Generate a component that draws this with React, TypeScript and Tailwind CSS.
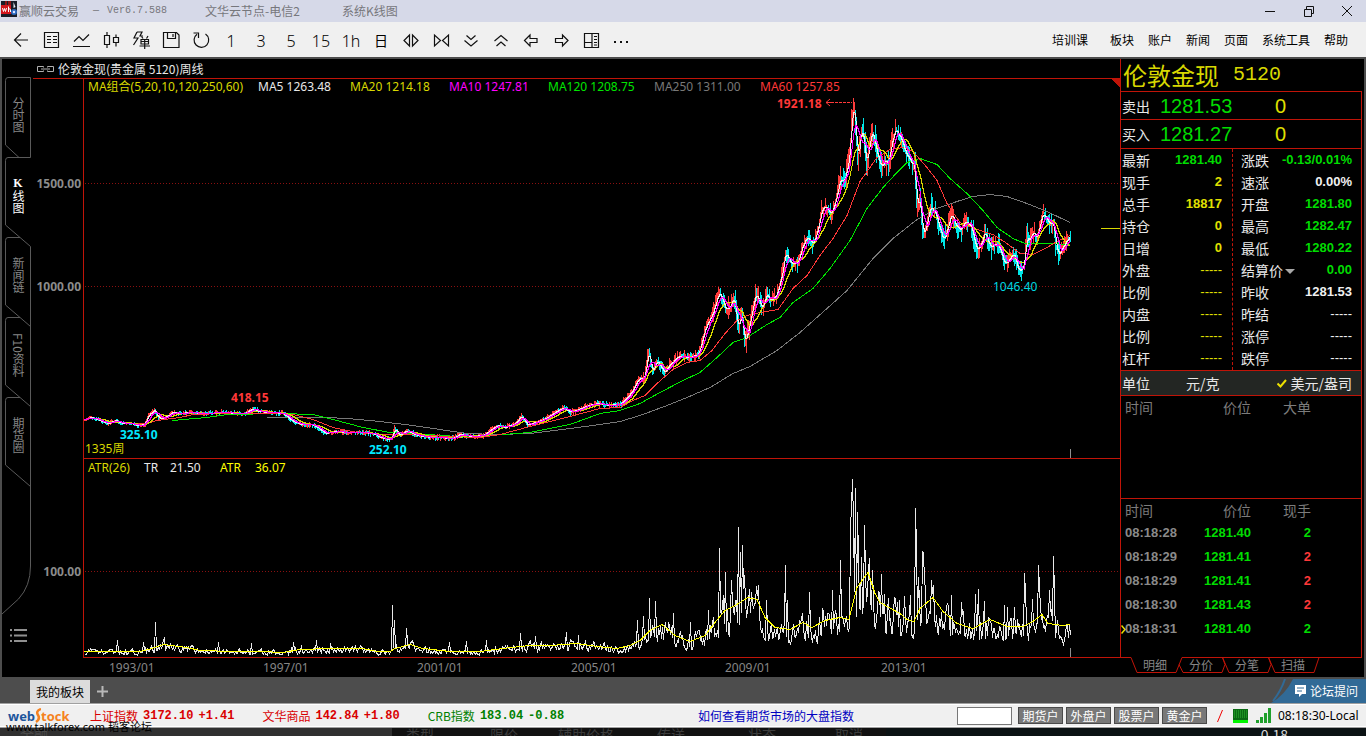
import React from "react";

type Pt = [number, number];

const CJK = "font-['Noto_Sans_CJK_SC',sans-serif]";
const LATIN = "font-['Noto_Sans','Noto_Sans_CJK_SC',sans-serif]";
const ARIAL = "font-['Liberation_Sans','Noto_Sans_CJK_SC',sans-serif]";
const MONO = "font-['Liberation_Mono',monospace]";

/* ---------- chart data ---------- */

const PRICE: Pt[] = [
  [84, 419], [90, 417], [97, 419], [107, 423], [115, 420], [122, 423], [130, 423], [138, 425], [144, 424], [148, 415],
  [154, 409], [158, 418], [165, 417], [172, 412], [180, 413], [190, 412], [200, 413], [220, 412], [245, 413], [252, 408],
  [258, 411], [270, 412], [283, 413], [291, 420], [300, 424], [310, 424], [317, 427], [325, 433], [336, 431], [345, 432],
  [360, 432], [372, 433], [380, 437], [388, 439], [391, 438], [394, 428], [399, 435], [407, 430], [413, 434], [430, 437],
  [440, 437], [452, 438], [460, 434], [470, 436], [483, 435], [488, 431], [497, 425], [505, 427], [515, 423], [521, 415],
  [527, 425], [535, 422], [545, 418], [555, 412], [563, 407], [570, 412], [578, 409], [585, 406], [593, 404], [600, 403],
  [608, 405], [620, 404], [627, 396], [633, 389], [637, 379], [644, 377], [648, 350], [652, 372], [656, 360], [664, 372],
  [670, 363], [680, 355], [690, 357], [698, 354], [705, 327], [712, 313], [719, 291], [725, 309], [730, 307], [733, 296],
  [738, 330], [741, 310], [744, 343], [750, 320], [755, 292], [762, 308], [766, 293], [770, 300], [776, 296], [781, 276],
  [785, 252], [790, 263], [797, 263], [803, 242], [807, 236], [812, 245], [818, 226], [821, 210], [825, 206], [831, 214],
  [835, 200], [840, 177], [843, 182], [845, 176], [849, 156], [851, 121], [853, 101], [855, 121], [857, 163], [861, 128],
  [864, 145], [866, 168], [869, 143], [872, 131], [876, 152], [881, 167], [884, 160], [888, 163], [891, 143], [895, 128],
  [901, 139], [905, 153], [909, 157], [912, 165], [914, 161], [916, 207], [919, 197], [923, 238], [930, 205], [936, 216],
  [943, 241], [947, 229], [951, 212], [955, 224], [960, 230], [964, 220], [970, 224], [976, 250], [981, 243], [984, 231],
  [990, 248], [997, 242], [1001, 254], [1004, 264], [1008, 260], [1013, 252], [1018, 271], [1022, 268], [1024, 262], [1026, 235],
  [1029, 240], [1033, 230], [1036, 239], [1039, 226], [1042, 213], [1049, 223], [1053, 222], [1055, 244], [1058, 255],
  [1062, 247], [1066, 240], [1069, 238], [1071, 228],
];

const MA60: Pt[] = [
  [130, 423], [147, 423], [157, 420], [180, 417], [193, 414], [227, 413], [280, 413], [293, 414], [313, 419], [333, 427],
  [357, 432], [380, 434], [413, 434], [447, 436], [480, 437], [500, 434], [530, 426], [570, 416], [600, 408], [620, 407],
  [633, 400], [645, 395], [657, 383], [673, 369], [687, 362], [700, 360], [712, 350], [725, 333], [737, 320], [747, 315],
  [760, 312], [778, 309], [793, 288], [807, 275], [820, 255], [833, 238], [847, 215], [860, 181], [877, 157], [890, 149],
  [903, 147], [913, 151], [927, 167], [937, 180], [947, 203], [960, 222], [977, 229], [993, 234], [1007, 243], [1020, 253],
  [1033, 254], [1047, 247], [1057, 241], [1070, 235],
];

const MA120: Pt[] = [
  [172, 420], [207, 417], [227, 414], [280, 413], [313, 414], [333, 419], [363, 427], [390, 432], [427, 434], [457, 436],
  [490, 435], [530, 432], [570, 424], [600, 413], [620, 410], [640, 403], [660, 392], [683, 380], [700, 372], [717, 357],
  [733, 342], [747, 337], [767, 324], [780, 317], [793, 302], [813, 288], [830, 268], [850, 240], [867, 208], [883, 187],
  [897, 172], [907, 162], [920, 158], [937, 164], [950, 178], [967, 193], [983, 210], [997, 227], [1013, 238], [1025, 243],
  [1047, 243], [1070, 244],
];

const MA250: Pt[] = [
  [267, 417], [327, 417], [347, 418], [380, 421], [413, 425], [440, 429], [467, 433], [497, 434], [530, 433], [570, 428],
  [600, 424], [620, 421], [640, 415], [667, 405], [687, 397], [710, 387], [733, 373], [750, 366], [777, 350], [800, 332],
  [827, 308], [847, 290], [873, 258], [893, 238], [917, 219], [937, 208], [957, 201], [973, 196], [990, 194], [1007, 196],
  [1027, 203], [1047, 211], [1070, 222],
];

const ATR: Pt[] = [
  [84, 651], [140, 651], [152, 648], [163, 644], [187, 647], [200, 650], [233, 651], [260, 651], [283, 652], [300, 649],
  [330, 648], [363, 648], [377, 651], [390, 651], [395, 648], [410, 644], [423, 648], [450, 651], [480, 651], [503, 648],
  [530, 645], [550, 645], [577, 643], [597, 646], [617, 648], [630, 645], [640, 640], [650, 630], [662, 624], [675, 635],
  [690, 641], [705, 635], [715, 622], [725, 610], [735, 605], [748, 597], [757, 599], [765, 617], [775, 627], [790, 629],
  [803, 622], [812, 627], [825, 620], [840, 617], [849, 619], [857, 587], [868, 572], [875, 593], [880, 602], [900, 613],
  [907, 619], [914, 621], [920, 608], [927, 602], [933, 597], [943, 611], [957, 623], [973, 628], [990, 619], [1007, 626],
  [1023, 626], [1033, 621], [1042, 614], [1048, 623], [1063, 625], [1070, 624],
];

const SPIKES: Pt[] = [
  [117, 640], [143, 642], [155, 622], [164, 638], [218, 642], [251, 643], [293, 642], [316, 640], [330, 643], [392, 605],
  [394, 620], [406, 628], [449, 642], [466, 641], [486, 640], [520, 633], [535, 636], [566, 632], [578, 635], [637, 620],
  [643, 616], [649, 598], [655, 601], [673, 613], [690, 622], [708, 610], [719, 548], [725, 572], [731, 580], [738, 527],
  [740, 552], [742, 545], [744, 575], [756, 586], [766, 600], [785, 565], [787, 600], [809, 592], [822, 608], [832, 590],
  [840, 560], [850, 530], [851, 505], [852, 479], [853, 522], [855, 488], [857, 512], [858, 556], [861, 557], [864, 525],
  [872, 570], [881, 574], [884, 594], [899, 600], [904, 596], [910, 595], [915, 508], [916, 549], [918, 577], [922, 552],
  [923, 553], [924, 580], [931, 580], [933, 585], [951, 595], [961, 602], [975, 594], [978, 589], [984, 601], [1004, 605],
  [1007, 607], [1014, 607], [1024, 573], [1025, 592], [1032, 599], [1038, 565], [1039, 588], [1049, 590], [1053, 556], [1054, 592],
];

function sample(points: Pt[], x: number): number {
  if (x <= points[0][0]) return points[0][1];
  for (let i = 1; i < points.length; i++) {
    if (x <= points[i][0]) {
      const [x0, y0] = points[i - 1];
      const [x1, y1] = points[i];
      return y0 + ((y1 - y0) * (x - x0)) / (x1 - x0);
    }
  }
  return points[points.length - 1][1];
}

function makeRandom(seed: number) {
  let s = seed;
  return () => {
    s = (s * 1664525 + 1013904223) % 4294967296;
    return s / 4294967296;
  };
}

const rnd = makeRandom(77);
const FIRST = 84;
const LAST = 1070;
const VOLATILITY: Pt[] = [
  [84, 2], [560, 3], [620, 3], [650, 7], [700, 5], [720, 10], [745, 14], [780, 9], [840, 11], [860, 17], [900, 11], [930, 12], [1070, 10],
];

const closes: number[] = [];
let upBars = "";
let downBars = "";
let rising = true;
for (let x = FIRST; x <= LAST; x++) {
  const vol = sample(VOLATILITY, x);
  const close = sample(PRICE, x) + (rnd() - 0.5) * vol * 0.3;
  const prev = closes.length ? closes[closes.length - 1] : close;
  const top = Math.round(Math.min(close, prev) - Math.pow(rnd(), 1.5) * vol);
  const bottom = Math.round(Math.max(close, prev) + Math.pow(rnd(), 1.5) * vol) + 1;
  const seg = `M${x}.5 ${top}V${bottom}`;
  if (rnd() < 0.7) rising = close <= prev;
  if (rising) upBars += seg;
  else downBars += seg;
  closes.push(close);
}

function average(n: number): string {
  return closes
    .map((_, i) => {
      const part = closes.slice(Math.max(0, i - n + 1), i + 1);
      const y = part.reduce((a, b) => a + b, 0) / part.length;
      return `${FIRST + i},${Math.round(y) + 0.5}`;
    })
    .join(" ");
}

const toLine = (p: Pt[]) => p.map(([x, y]) => `${x},${y}.5`).join(" ");

const spikeAt = new Map<number, number>(SPIKES);
const trueRange: string[] = [];
let level = 0.5;
for (let x = FIRST; x <= LAST; x++) {
  const h = 657 - sample(ATR, x);
  level = level * 0.35 + rnd() * 0.65;
  const quick = 657 - h * (0.35 + 1.15 * Math.pow(level, 1.3));
  const spike = spikeAt.get(x);
  trueRange.push(`${x}.5,${Math.min(655, Math.round(spike ?? quick))}`);
}

/* ---------- toolbar ---------- */

const Icon = ({ children, size = 20 }: { children: React.ReactNode; size?: number }) => (
  <svg width={size} height={size} viewBox="0 0 20 20" fill="none" stroke="#111" strokeWidth="1.2" aria-hidden="true">
    {children}
  </svg>
);

const Glyph = ({ children }: { children: React.ReactNode }) => (
  <span className={`${LATIN} pt-0.5 text-base font-light leading-5 text-black`}>{children}</span>
);

const TOOLS: { label: string; icon: React.ReactNode }[] = [
  { label: "返回", icon: <Icon><path d="M17 10H4M10 3.500L3.500 10L10 16.500" /></Icon> },
  { label: "报价列表", icon: <Icon><path d="M3.500 2.500h14v15h-14zM6 6.500h4M12 6.500h4M6 9.500h4M12 9.500h4M6 12.500h4M12 12.500h4M6 15.500h0" /></Icon> },
  { label: "分时图", icon: <Icon><path d="M2 16.500h17M3 11.500l5-5l4 4l6-6" /></Icon> },
  { label: "K线图", icon: <Icon><path d="M3.500 5.500h5v9h-5zM6 2v3.500M6 14.500v3.500M12.500 7.500h5v5h-5zM15 4.500v3M15 12.500v4" /></Icon> },
  {
    label: "闪电下单",
    icon: (
      <Icon>
        <path d="M6 2L3 8h4L2.500 15M6 2h5L9 6h3" />
        <path d="M10.500 6.500l1.500 2M17 6l-1.500 2.500M10 9.500h7.500v4.500H10zM10 11.500h7.500M8.500 16h10.500M13.700 9.500V19" />
      </Icon>
    ),
  },
  { label: "保存", icon: <Icon><path d="M2.500 2.500h13l2.500 2.500v12.500h-15.500zM6.500 2.500v6h8v-6M12 4v3" /></Icon> },
  { label: "刷新", icon: <Icon><path d="M14.500 4A7.300 7.300 0 1 1 6 4.200M2.500 3h5v5" /></Icon> },
  { label: "1分钟", icon: <Glyph>1</Glyph> },
  { label: "3分钟", icon: <Glyph>3</Glyph> },
  { label: "5分钟", icon: <Glyph>5</Glyph> },
  { label: "15分钟", icon: <Glyph>15</Glyph> },
  { label: "1小时", icon: <Glyph>1h</Glyph> },
  { label: "日线", icon: <span className={`${CJK} text-sm leading-5`}>日</span> },
  { label: "放宽", icon: <Icon><path d="M8.500 5v11L3 10.500zM11.500 5v11l5.500-5.500z" /></Icon> },
  { label: "收窄", icon: <Icon><path d="M3.500 5v11L9.500 10.500zM17.500 5v11l-6-5.500z" /></Icon> },
  { label: "缩小", icon: <Icon><path d="M5.500 5.500l4.500 4l4.500-4M3.500 10.500l6.500 5.500l6.500-5.500" /></Icon> },
  { label: "放大", icon: <Icon><path d="M3.500 11l6.500-5.500l6.500 5.500M5.500 16l4.500-4l4.500 4" /></Icon> },
  { label: "左移", icon: <Icon><path d="M3.500 10.500l5.500-5.500v3.500h7v4h-7v3.500z" /></Icon> },
  { label: "右移", icon: <Icon><path d="M17 10.500l-5.500-5.500v3.500h-7v4h7v3.500z" /></Icon> },
  { label: "布局", icon: <Icon><path d="M3.500 3.500h14v14h-14zM11 3.500v14M3.500 12.500h7.500M13 6.500h3M13 9.500h3M13 12.500h3M13 15h3" /></Icon> },
  { label: "更多", icon: <Icon><path d="M3 12h2M9 12h2M15 12h2" strokeWidth="2" /></Icon> },
];

const MENUS = ["板块", "账户", "新闻", "页面", "系统工具", "帮助"];

/* ---------- pieces ---------- */

function TitleBar() {
  return (
    <header className="flex h-[22px] shrink-0 items-center bg-[#d6d9e8] text-xs text-[#76777c]">
      <svg className="mb-1 ml-px" width="16" height="16" viewBox="0 0 16 16" aria-hidden="true">
        <rect width="16" height="16" fill="#181c28" />
        <path d="M0 4h10v9H0z" fill="#d2141c" />
        <path d="M7 0h3v4H7zM4 0h2v4H4z" fill="#8c1418" />
        <path d="M12.500 1l2 5l-2 1z" fill="#e8eef8" />
        <circle cx="13" cy="11" r="3" fill="#2f6ac0" />
        <circle cx="13" cy="11" r="1.200" fill="#dde8ff" />
        <path d="M1.500 7l1 3.500l1-3l1 3l1-3.500M7.500 5.500v5.500M7.500 8.500q2-1.500 2 0v2.500" stroke="#fff" fill="none" />
      </svg>
      <span className="ml-0.5">赢顺云交易</span>
      <span className={`${MONO} ml-3.5 text-[10px]`}>—</span>
      <span className={`${MONO} ml-2 text-[10px]`}>Ver6.7.588</span>
      <span className="ml-[38px]">文华云节点-电信2</span>
      <span className="ml-[42px]">系统K线图</span>
      <div className="ml-auto flex">
        <button aria-label="最小化" className="grid h-[22px] w-[39px] place-items-center">
          <svg width="12" height="12" viewBox="0 0 12 12" stroke="#111" fill="none"><path d="M1 6.500h10" /></svg>
        </button>
        <button aria-label="还原" className="grid h-[22px] w-[39px] place-items-center">
          <svg width="12" height="12" viewBox="0 0 12 12" stroke="#111" fill="none"><path d="M1.500 4.500h7v7h-7zM3.500 4.500v-3h7v7h-2" /></svg>
        </button>
        <button aria-label="关闭" className="grid h-[22px] w-[38px] place-items-center">
          <svg width="12" height="12" viewBox="0 0 12 12" stroke="#111" fill="none"><path d="M1 1l10 10M11 1L1 11" /></svg>
        </button>
      </div>
    </header>
  );
}

function Toolbar() {
  return (
    <nav className="flex h-[35px] shrink-0 items-center bg-[#f0f0f0] pl-1.5 pr-[18px] text-black">
      <div className="flex">
        {TOOLS.map((t) => (
          <button key={t.label} aria-label={t.label} className="grid h-[30px] w-[30px] place-items-center">
            {t.icon}
          </button>
        ))}
      </div>
      <div className="ml-auto flex gap-3.5 text-xs">
        <button className="mr-2">培训课</button>
        {MENUS.map((m) => (
          <button key={m}>{m}</button>
        ))}
      </div>
    </nav>
  );
}

function Sidebar() {
  const tab = "flex h-20 w-full items-center justify-center pb-1 text-xs leading-3 [writing-mode:vertical-rl]";
  return (
    <aside className="grid w-[30px] shrink-0">
      <svg className="col-start-1 row-start-1" width="30" height="618" viewBox="2 59 30 618" fill="none" stroke="#5a5a5a" aria-hidden="true">
        <path d="M30.500 157.500V77.500H8q-2.500 0-2.500 3V145L19 157.500" />
        <path d="M30.500 157.500H8q-2.500 0-2.500 3V225L30.500 246.500V566q0 20-12 33L2 614" />
        <path d="M20 237.500H8q-2.500 0-2.500 3V305L30.500 326.500" />
        <path d="M20 317.500H8q-2.500 0-2.500 3V385L30.500 406.500" />
        <path d="M20 397.500H8q-2.500 0-2.500 3V465L30.500 486.500" />
      </svg>
      <div className="col-start-1 row-start-1 flex flex-col pl-0.5 pt-[18px] text-[#858585]">
        <button className={tab}>分时图</button>
        <button className={`${tab} text-white`}>
          <span className="font-['Liberation_Serif',serif] font-bold [text-orientation:upright]">K</span>线图
        </button>
        <button className={tab}>新闻链</button>
        <button className={tab}>F10资料</button>
        <button className={tab}>期货圈</button>
        <button aria-label="列表" className="mt-[151px] grid w-full place-items-center">
          <svg width="17" height="15" viewBox="0 0 17 15" stroke="#909090" strokeWidth="2" fill="none"><path d="M0 2h2M4 2h13M0 7.500h2M4 7.500h13M0 13h2M4 13h13" /></svg>
        </button>
      </div>
    </aside>
  );
}

const LEGEND: [number, string, string][] = [
  [88, "#d8d800", "MA组合(5,20,10,120,250,60)"],
  [258, "#e8e8e8", "MA5 1263.48"],
  [350, "#d8d800", "MA20 1214.18"],
  [449, "#ff00ff", "MA10 1247.81"],
  [548, "#00e600", "MA120 1208.75"],
  [654, "#787878", "MA250 1311.00"],
  [760, "#ff3838", "MA60 1257.85"],
];

const YEARS: [number, string][] = [
  [109, "1993/01"], [263, "1997/01"], [417, "2001/01"], [571, "2005/01"], [725, "2009/01"], [881, "2013/01"],
];

function Charts() {
  return (
    <section className="min-w-0 flex-1">
      <h1 className="flex h-[19px] items-center gap-1 pl-[5px] text-xs font-normal leading-[19px] text-[#e8e8e8]">
        <svg width="17" height="6" viewBox="0 0 17 6" fill="none" stroke="#b0b0b0" aria-hidden="true"><path d="M6.500 1.500v-1h-6v5h6v-1M10.500 1.500v-1h6v5h-6v-1M4 3h9" /></svg>
        伦敦金现(贵金属 5120)周线
      </h1>
      <svg className={`${LATIN} block h-auto w-full text-xs`} viewBox="32 78 1088 599" fill="none">
        <g stroke="#8a1010" strokeDasharray="1 2" shapeRendering="crispEdges">
          <path d="M85 183.500H1120M85 286.500H1120M85 571.500H1120" />
        </g>
        <g shapeRendering="crispEdges">
          <path d={upBars} stroke="#ff3c3c" />
          <path d={downBars} stroke="#00e8e8" />
          <polyline points={toLine(MA250)} stroke="#787878" />
          <polyline points={toLine(MA120)} stroke="#00e600" />
          <polyline points={toLine(MA60)} stroke="#ff3838" />
          <polyline points={average(16)} stroke="#d8d800" />
          <polyline points={average(4)} stroke="#f0f0f0" />
          <polyline points={average(8)} stroke="#ff00ff" />
          <polyline points={trueRange.join(" ")} stroke="#e8e8e8" />
          <polyline points={toLine(ATR)} stroke="#ffff00" />
        </g>
        <g stroke="#c01408" shapeRendering="crispEdges">
          <path d="M33 78.500H1120M83.500 79V658M83 458.500H1120M83 657.500H1120" />
          <path d="M1111 79H1120V88Z" fill="#c01408" stroke="none" />
        </g>
        <path d="M1070.500 449v9M1070.500 648v9" stroke="#909090" />
        <path d="M1101 228.500H1120" stroke="#d8d800" />
        <path d="M831 102.500H852" stroke="#ff3838" strokeDasharray="3 1" />
        <path d="M830 99l-4 3.500l4 3.500M826 102.500h5" stroke="#ff3838" />
        {LEGEND.map(([x, color, text]) => (
          <text key={text} x={x} y="91" fill={color}>{text}</text>
        ))}
        <g fill="#d8d800">
          <text x="85" y="453">1335周</text>
          <text x="88" y="472">ATR(26)</text>
        </g>
        <g fill="#e8e8e8">
          <text x="144" y="472">TR</text>
          <text x="170" y="472">21.50</text>
        </g>
        <g fill="#ffff00">
          <text x="220" y="472">ATR</text>
          <text x="255" y="472">36.07</text>
        </g>
        <g fontWeight="bold">
          <g fill="#ff3838">
            <text x="777" y="108">1921.18</text>
            <text x="231" y="402">418.15</text>
          </g>
          <g fill="#00e8ff">
            <text x="120" y="439">325.10</text>
            <text x="369" y="454">252.10</text>
          </g>
          <g fill="#8c8c8c" textAnchor="end">
            <text x="81" y="188">1500.00</text>
            <text x="81" y="291">1000.00</text>
            <text x="81" y="576">100.00</text>
          </g>
        </g>
        <text x="993" y="291" fill="#00d8e0">1046.40</text>
        <g fill="#868686">
          {YEARS.map(([x, text]) => (
            <text key={text} x={x} y="672">{text}</text>
          ))}
        </g>
      </svg>
    </section>
  );
}

type Row = { label: string; value: string; tone: string; menu?: boolean };
const Y = "text-[#e0e000]";
const G = "text-[#00dc00]";
const W = "text-[#f0f0f0]";
const R = "text-[#ff3838]";

const LEFT: Row[] = [
  { label: "最新", value: "1281.40", tone: G },
  { label: "现手", value: "2", tone: Y },
  { label: "总手", value: "18817", tone: Y },
  { label: "持仓", value: "0", tone: Y },
  { label: "日增", value: "0", tone: Y },
  { label: "外盘", value: "-----", tone: Y },
  { label: "比例", value: "-----", tone: Y },
  { label: "内盘", value: "-----", tone: Y },
  { label: "比例", value: "-----", tone: Y },
  { label: "杠杆", value: "-----", tone: Y },
];

const RIGHT: Row[] = [
  { label: "涨跌", value: "-0.13/0.01%", tone: G },
  { label: "速涨", value: "0.00%", tone: W },
  { label: "开盘", value: "1281.80", tone: G },
  { label: "最高", value: "1282.47", tone: G },
  { label: "最低", value: "1280.22", tone: G },
  { label: "结算价", value: "0.00", tone: G, menu: true },
  { label: "昨收", value: "1281.53", tone: W },
  { label: "昨结", value: "-----", tone: W },
  { label: "涨停", value: "-----", tone: W },
  { label: "跌停", value: "-----", tone: W },
];

function QuoteTable({ rows }: { rows: Row[] }) {
  return (
    <table className="w-full table-fixed">
      <tbody>
        {rows.map((r, i) => (
          <tr key={i} className="h-[22px]">
            <th scope="row" className="w-7 whitespace-nowrap p-0 text-left text-sm font-normal leading-[22px] text-[#e8e8e8]">
              {r.label}
              {r.menu && (
                <svg className="ml-0.5 inline-block" width="10" height="6" viewBox="0 0 10 6" aria-hidden="true"><path d="M0 0h10L5 5z" fill="#a8a8a8" /></svg>
              )}
            </th>
            <td className={`p-0 text-right text-[13px] leading-[22px] ${ARIAL} ${r.value === "-----" ? "font-normal" : "font-bold"} ${r.tone}`}>
              {r.value}
            </td>
          </tr>
        ))}
      </tbody>
    </table>
  );
}

const TICKS: [string, string, string, string][] = [
  ["08:18:28", "1281.40", "2", G],
  ["08:18:29", "1281.41", "2", R],
  ["08:18:29", "1281.41", "2", R],
  ["08:18:30", "1281.43", "2", R],
  ["08:18:31", "1281.40", "2", G],
];

function TickHead({ last }: { last: string }) {
  return (
    <thead className="text-sm text-[#7c7c7c]">
      <tr className="h-[22px]">
        <th className="w-[66px] p-0 pl-1 text-left font-normal">时间</th>
        <th className="w-16 p-0 text-right font-normal">价位</th>
        <th className="w-[60px] p-0 text-right font-normal">{last}</th>
        <th className="p-0" />
      </tr>
    </thead>
  );
}

function QuotePanel() {
  const line = "border-[#c01408]";
  return (
    <aside className="flex w-[244px] shrink-0 flex-col pr-0.5">
      <div className={`border-l ${line} flex flex-1 flex-col`}>
        <h2 className="flex h-8 items-center gap-3.5 pl-0.5 text-2xl font-normal leading-8 text-[#d8d800]">
          伦敦金现 <span className={`${MONO} text-xl`}>5120</span>
        </h2>
        <div className={`flex flex-1 flex-col border-r border-t ${line}`}>
          {[["卖出", "1281.53", "h-7"], ["买入", "1281.27", "h-[29px]"]].map(([label, value, height]) => (
            <div key={label} className={`flex items-center border-b ${height} ${line}`}>
              <span className="w-[39px] pl-px text-sm text-[#e8e8e8]">{label}</span>
              <span className={`${ARIAL} w-[115px] text-xl ${G}`}>{value}</span>
              <span className={`${ARIAL} text-xl ${Y}`}>0</span>
            </div>
          ))}
          <div className="flex h-[221px]">
            <div className={`w-28 shrink-0 border-r border-dashed ${line} pl-px pr-2.5`}>
              <QuoteTable rows={LEFT} />
            </div>
            <div className="min-w-0 flex-1 pl-2 pr-[9px]">
              <QuoteTable rows={RIGHT} />
            </div>
          </div>
          <div className={`flex h-[26px] items-center border-y ${line} bg-[#232623] pl-px pr-[9px] text-sm text-[#e8e8e8]`}>
            <span>单位</span>
            <button className="ml-9">元/克</button>
            <button className="ml-auto flex items-center gap-1">
              <svg width="10" height="9" viewBox="0 0 10 9" fill="none" stroke="#ece000" strokeWidth="2" aria-hidden="true"><path d="M0.500 4.500l3 3L9 1" /></svg>
              美元/盎司
            </button>
          </div>
          <table className="mb-20 w-full table-fixed">
            <TickHead last="大单" />
          </table>
          <div className={`flex-1 border-t ${line}`}>
            <table className="w-full table-fixed">
              <TickHead last="现手" />
              <tbody className={`text-[13px] font-bold ${ARIAL}`}>
                {TICKS.map(([time, price, volume, tone], i) => (
                  <tr key={i} className="h-6">
                    <td className="p-0 text-[#8a8a8a]">
                      <span className="flex items-center">
                        <span className="w-1">
                          {i === 4 && (
                            <svg width="5" height="9" viewBox="0 0 5 9" fill="none" stroke="#ece000" strokeWidth="1.500" aria-hidden="true"><path d="M0.500 0.500L4 4.500L0.500 8.500" /></svg>
                          )}
                        </span>
                        {time}
                      </span>
                    </td>
                    <td className={`p-0 text-right ${G}`}>{price}</td>
                    <td className={`p-0 text-right ${tone}`}>{volume}</td>
                    <td className="p-0" />
                  </tr>
                ))}
              </tbody>
            </table>
          </div>
        </div>
      </div>
      <div className="grid h-5 shrink-0">
        <svg className="col-start-1 row-start-1" width="242" height="20" viewBox="1120 657 242 20" fill="none" stroke="#c01408" aria-hidden="true">
          <path d="M1120 657.500H1131L1137 672.500H1176L1182 657.500H1362" />
          <path d="M1179 664.500L1183 672.500H1222L1225 664.500L1222.500 657.500L1229 672.500H1268L1271 664.500L1268.500 657.500L1275 672.500H1314L1319 657.500" />
        </svg>
        <div className="col-start-1 row-start-1 flex h-4 pl-3 text-xs leading-4 text-[#868686]">
          {["明细", "分价", "分笔", "扫描"].map((t) => (
            <button key={t} className="w-[46px]">{t}</button>
          ))}
        </div>
      </div>
    </aside>
  );
}

function TabStrip() {
  return (
    <div className="flex h-[26px] shrink-0 items-end bg-[#4d4d4d] pl-[30px]">
      <button className="h-[23px] w-[60px] bg-[#dcdcdc] text-xs text-black">我的板块</button>
      <button aria-label="添加" className="grid h-[23px] w-6 place-items-center">
        <svg width="11" height="11" viewBox="0 0 11 11" stroke="#b8b8b8" strokeWidth="2"><path d="M5.500 0v11M0 5.500h11" /></svg>
      </button>
      <a href="#forum" className="ml-auto grid text-xs text-white">
        <svg className="col-start-1 row-start-1" width="95" height="24" viewBox="0 0 95 24" aria-hidden="true">
          <path d="M22 0H95V24H0Q14 16 22 0z" fill="#316a96" />
          <path d="M14 0Q10 12 2 22" stroke="#316a96" strokeWidth="2" fill="none" />
        </svg>
        <span className="col-start-1 row-start-1 flex items-center gap-1 pl-6">
          <svg width="11" height="12" viewBox="0 0 11 12" aria-hidden="true"><path d="M0 0h11v9H7l-3 3V9H0z" fill="#fff" /><path d="M2 3h7M2 6h5" stroke="#316a96" /></svg>
          论坛提问
        </span>
      </a>
    </div>
  );
}

const INDICES = [
  { name: "上证指数", value: "3172.10", change: "+1.41", tone: "text-[#d90000]" },
  { name: "文华商品", value: "142.84", change: "+1.80", tone: "text-[#d90000]" },
  { name: "CRB指数", value: "183.04", change: "-0.88", tone: "text-[#008000]" },
];

function StatusBar() {
  return (
    <footer className="relative flex h-[25px] shrink-0 items-center border-b border-t border-b-[#a0a0a0] border-t-[#a0a0a0] bg-[#f0f0f0] pl-2 text-xs shadow-[inset_0_1px_0_#fff,inset_0_-1px_0_#fff]">
      <span className="flex w-[82px] items-center font-['Open_Sans',sans-serif] text-[13px] font-bold leading-4">
        <span className="text-[#1d559c]">web</span>
        <svg width="6" height="16" viewBox="0 0 6 16" fill="none" stroke="#f58220" strokeWidth="2.500" aria-hidden="true"><path d="M6 1Q0.500 3 3 7T1 14" /></svg>
        <span className="text-[#f58220]">tock</span>
      </span>
      <div className="flex gap-7">
        {INDICES.map((q) => (
          <span key={q.name} className={`flex items-center gap-[5px] ${q.tone}`}>
            {q.name}
            <b className={MONO}>{q.value}</b>
            <b className={MONO}>{q.change}</b>
          </span>
        ))}
      </div>
      <a href="#help" className="ml-auto text-[#0000c0]">如何查看期货市场的大盘指数</a>
      <input aria-label="代码" className="ml-[103px] h-[18px] w-[55px] border border-[#777] bg-white" />
      <div className="ml-1.5 flex gap-[3px]">
        {["期货户", "外盘户", "股票户", "黄金户"].map((t) => (
          <button key={t} className="h-[17px] w-[45px] border border-[#4a4a4a] bg-[#787878] text-xs leading-[15px] text-white">{t}</button>
        ))}
      </div>
      <svg className="ml-2.5" width="6" height="12" viewBox="0 0 6 12" stroke="#f00000" aria-hidden="true"><path d="M5.500 0L0.500 12" /></svg>
      <svg className="ml-2.5" width="15" height="14" viewBox="0 0 15 14" aria-hidden="true">
        <path d="M0 0h15v11H0z" fill="#0b6a14" />
        <path d="M1 2h13M1 4h13M1 6h13M1 8h13" stroke="#35b835" strokeDasharray="1 1" />
        <path d="M0 11h15v3H0z" fill="#00f400" />
      </svg>
      <svg className="ml-2" width="16" height="15" viewBox="0 0 16 15" fill="#1fa02c" aria-hidden="true"><path d="M0 12h3v3H0zM4 9h3v6H4zM8 5h3v10H8zM12 0h3v15h-3z" /></svg>
      <span className={`${LATIN} w-[94px] pl-1.5 text-xs text-black`}>08:18:30-Local</span>
      <span className={`${LATIN} absolute left-1.5 top-[15px] whitespace-nowrap text-[11px] leading-4 text-black`}>www.talkforex.com 韬客论坛</span>
    </footer>
  );
}

function LowerEdge() {
  return (
    <div className="flex h-2 shrink-0 overflow-hidden bg-[#111] text-sm leading-3 text-[#3c3c3c]">
      <span className="w-[392px] bg-[#303030] pl-5 text-[#4a4a4a]">金融</span>
      <span className="w-[98px] pl-3.5">类型</span>
      <span className="w-[68px]">限价</span>
      <span className="w-[99px]">辅助价格</span>
      <span className="w-[91px]">传送</span>
      <span className="w-[87px]">状态</span>
      <span className="w-[51px]">取消</span>
      <span className="flex-1 bg-[#0b1214] pr-[78px] text-right text-[#d8d8d8]">0.18</span>
    </div>
  );
}

export default function App() {
  return (
    <div className={`${CJK} flex min-h-screen flex-col bg-black`}>
      <TitleBar />
      <Toolbar />
      <main className="flex flex-1 border-x-2 border-t-2 border-[#4d4d4d] bg-black">
        <Sidebar />
        <Charts />
        <QuotePanel />
      </main>
      <TabStrip />
      <StatusBar />
      <LowerEdge />
    </div>
  );
}
